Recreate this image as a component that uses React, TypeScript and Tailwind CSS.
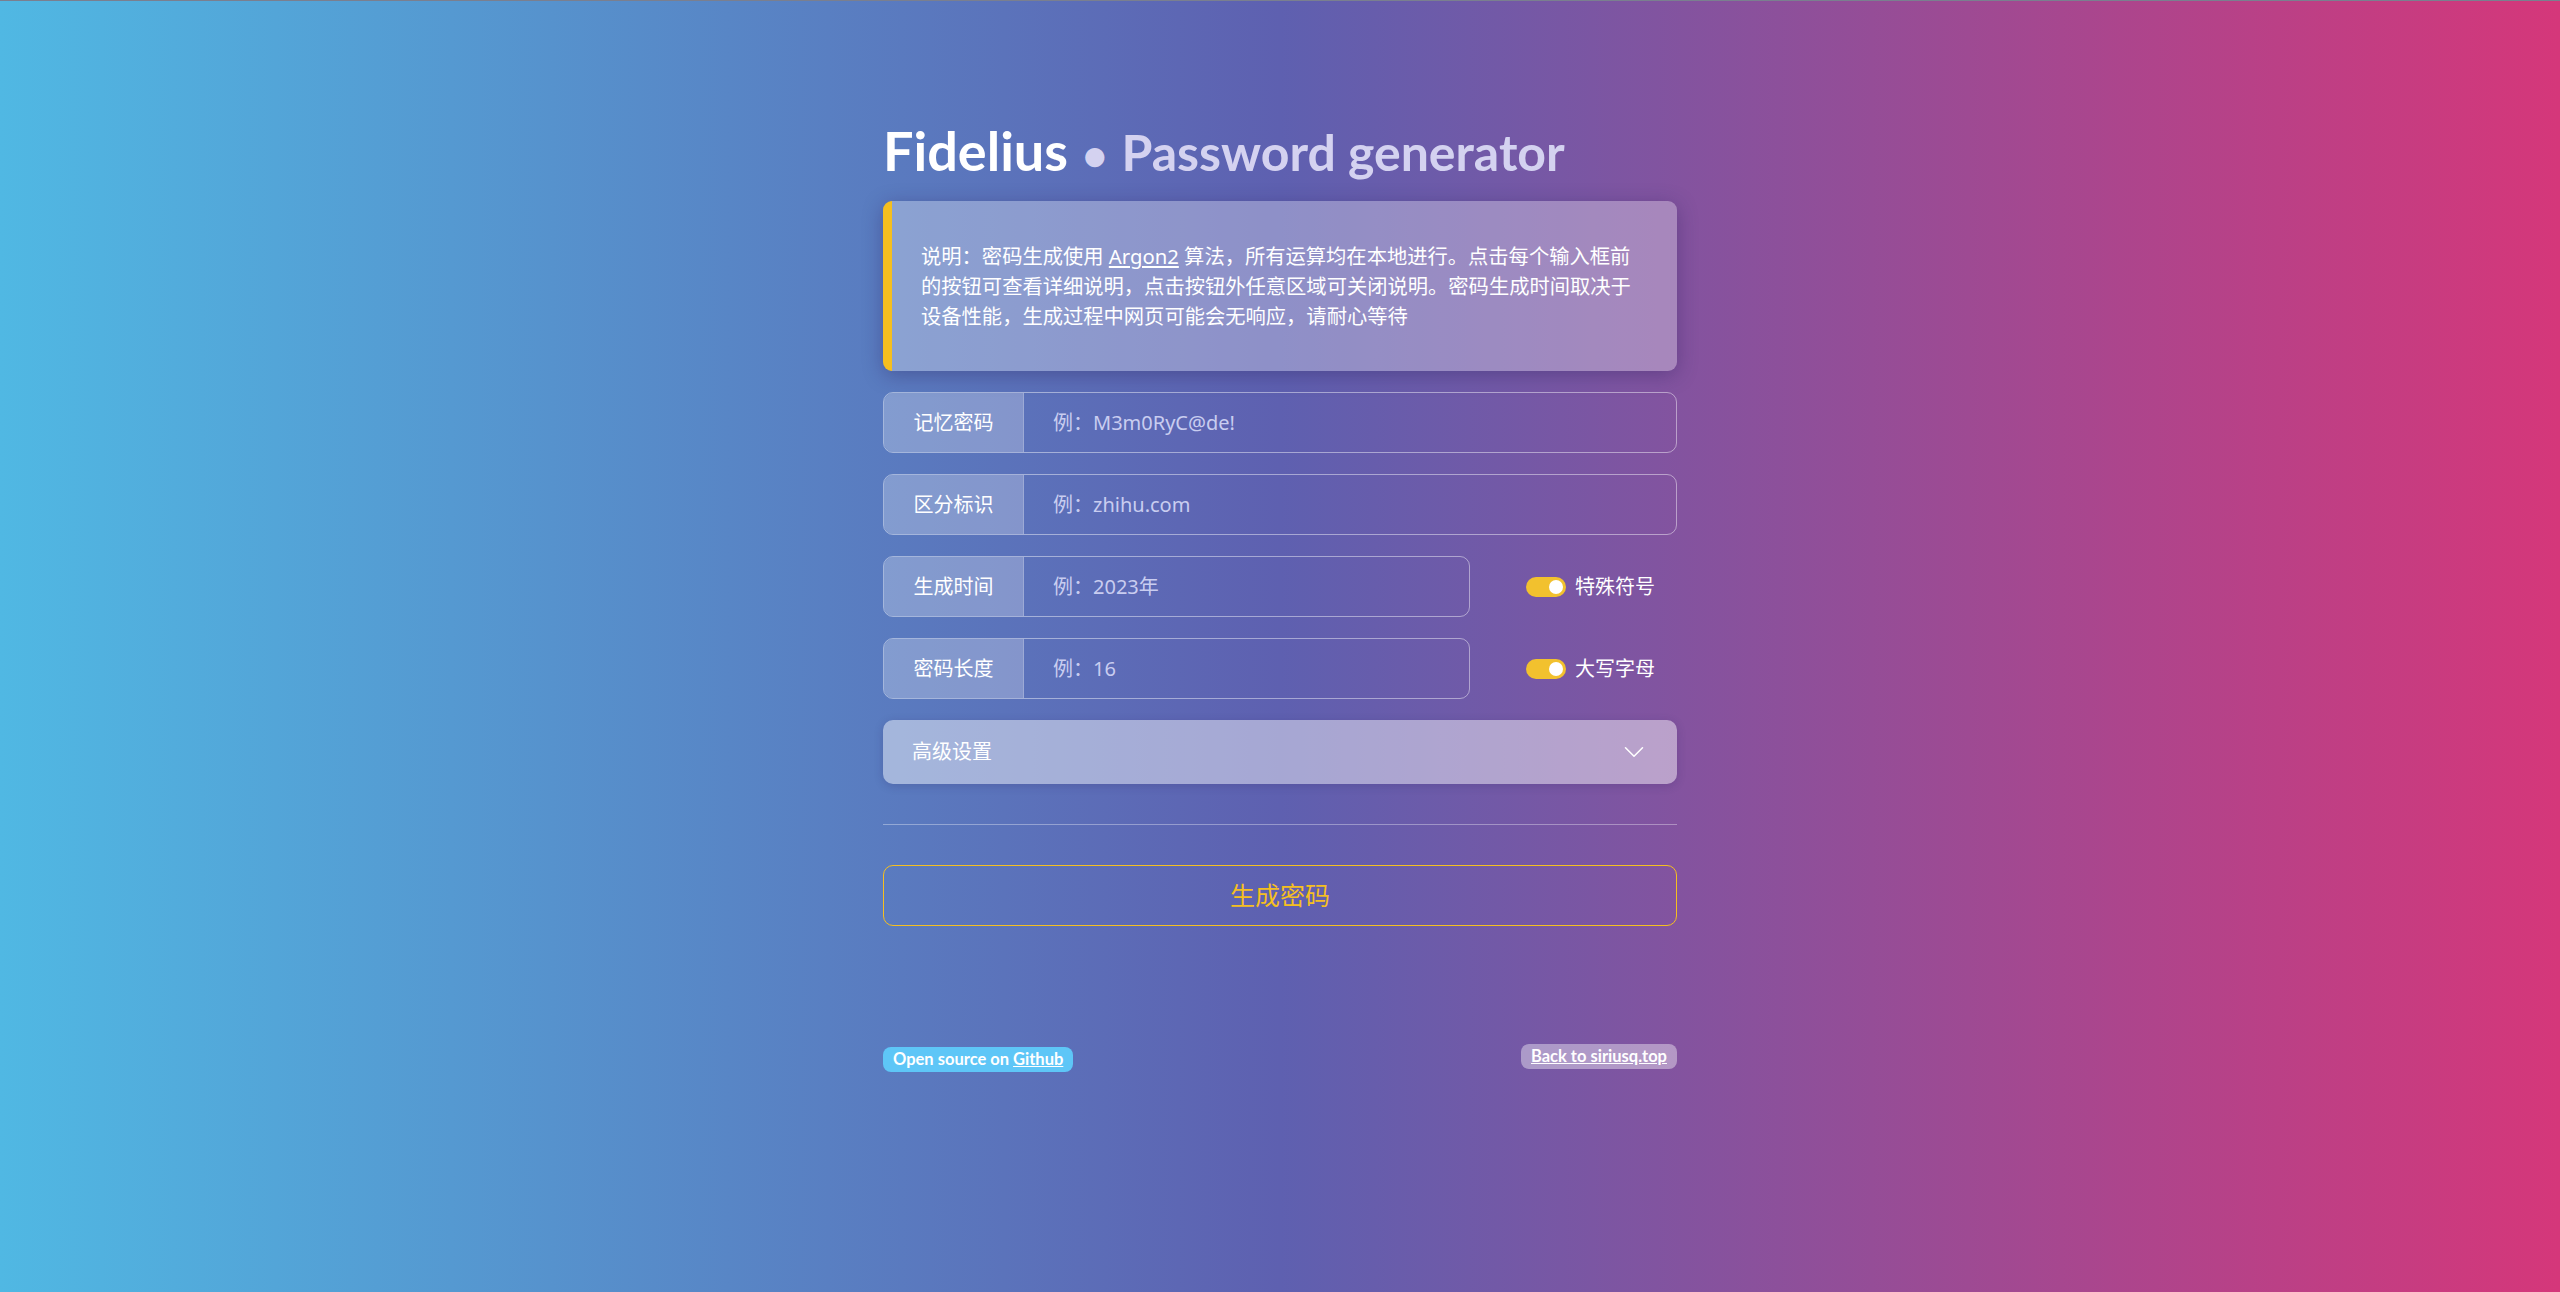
import { useState } from 'react';
import { ChevronDown } from 'lucide-react';

const FONT = "font-['Noto_Sans','Noto_Sans_CJK_SC',sans-serif]";

const FIELDS = [
  { label: '记忆密码', placeholder: '例：M3m0RyC@de!' },
  { label: '区分标识', placeholder: '例：zhihu.com' },
  { label: '生成时间', placeholder: '例：2023年', toggle: '特殊符号' },
  { label: '密码长度', placeholder: '例：16', toggle: '大写字母' },
];

function Toggle({ label }: { label: string }) {
  const [on, setOn] = useState(true);
  return (
    <button
      type="button"
      onClick={() => setOn((v) => !v)}
      className="flex items-center gap-[9px] pr-[22px] text-[20px] text-white"
    >
      <span
        className={
          on
            ? 'flex h-[20px] w-[40px] items-center justify-end rounded-full bg-[#f2c12e] px-[3px]'
            : 'flex h-[20px] w-[40px] items-center justify-start rounded-full bg-white/30 px-[3px]'
        }
      >
        <span className="h-[14px] w-[14px] rounded-full bg-white" />
      </span>
      {label}
    </button>
  );
}

export default function App() {
  return (
    <div
      className={`${FONT} min-h-[1292px] border-t border-[#7a7f8f] bg-[linear-gradient(to_right,#50b8e3_0%,#5e60b0_50%,#d5377a_100%)]`}
    >
      <div className="mx-auto flex w-[794px] flex-col pt-[117px]">
        {/* Title */}
        <h1 className="flex h-[66px] items-baseline font-['Lato',sans-serif] leading-[66px] font-bold">
          <span className="text-[54px] text-white">Fidelius</span>
          <span className="mx-[14px] text-[44px] text-[#d4d2f0]">•</span>
          <span className="text-[50px] text-[#d4d2f0]">Password generator</span>
        </h1>

        {/* Notice */}
        <div className="mt-[17px] rounded-[9px] border-l-[9px] border-[#f5bf1f] bg-white/30 py-[40px] pl-[29px] text-[20.3px] leading-[30px] whitespace-nowrap text-white shadow-[0_4px_20px_rgba(40,30,90,0.35)]">
          <p>
            说明：密码生成使用 <span className="underline underline-offset-2">Argon2</span>{' '}
            算法，所有运算均在本地进行。点击每个输入框前
          </p>
          <p>的按钮可查看详细说明，点击按钮外任意区域可关闭说明。密码生成时间取决于</p>
          <p>设备性能，生成过程中网页可能会无响应，请耐心等待</p>
        </div>

        {/* Inputs */}
        <div className="mt-[21px] flex flex-col gap-[21px]">
          {FIELDS.map((f) => (
            <div key={f.label} className="flex items-center">
              <div
                className={
                  f.toggle
                    ? 'flex h-[61px] w-[587px] overflow-hidden rounded-[10px] border border-white/45'
                    : 'flex h-[61px] w-full overflow-hidden rounded-[10px] border border-white/45'
                }
              >
                <div className="flex w-[140px] shrink-0 items-center justify-center border-r border-white/20 bg-white/25 text-[20px] text-white">
                  {f.label}
                </div>
                <input
                  placeholder={f.placeholder}
                  className="min-w-0 flex-1 bg-transparent px-[29px] text-[20px] text-white outline-none placeholder:text-[#c9cdf0]"
                />
              </div>
              {f.toggle && (
                <div className="flex flex-1 justify-end">
                  <Toggle label={f.toggle} />
                </div>
              )}
            </div>
          ))}
        </div>

        {/* Advanced */}
        <button
          type="button"
          className="mt-[21px] flex h-[64px] items-center justify-between rounded-[10px] bg-white/45 pr-[26px] pl-[29px] text-[20px] text-white shadow-[0_2px_10px_rgba(40,30,90,0.2)]"
        >
          高级设置
          <ChevronDown size={34} strokeWidth={1.1} />
        </button>

        <div className="mt-[40px] h-px bg-white/35" />

        <button
          type="button"
          className="mt-[40px] flex h-[61px] items-center justify-center rounded-[10px] border border-[#f5bf1f] text-[25px] text-[#f5bf1f]"
        >
          生成密码
        </button>

        {/* Footer */}
        <div className="mt-[118px] flex items-start justify-between font-['Lato',sans-serif]">
          <div className="mt-[3px] rounded-[8px] bg-[#5ec6f7] px-[10px] py-[2px] text-[16.5px] leading-[21px] font-bold text-white">
            Open source on <span className="underline">Github</span>
          </div>
          <div className="rounded-[8px] bg-white/40 px-[10px] py-[2px] text-[16.5px] leading-[21px] font-bold text-white underline">
            Back to siriusq.top
          </div>
        </div>
      </div>
    </div>
  );
}
